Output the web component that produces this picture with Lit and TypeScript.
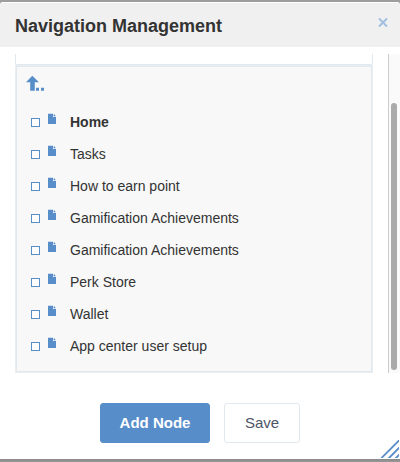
import { LitElement, html, css } from "lit";
import { customElement, property } from "lit/decorators.js";

@customElement("nav-node")
class NavNode extends LitElement {
  @property() label = "";
  @property({ type: Boolean }) selected = false;

  static styles = css`
    :host { display: block; }
    .row { display: flex; height: 32px; padding-left: 15px; color: #333; font-size: 14px; line-height: 32px; }
    .check { box-sizing: border-box; width: 9px; height: 9px; border: 1px solid #578dc9; background: #fff; margin: 12px 8px 0 0; }
    .file { display: block; width: 8px; height: 11px; margin: 7px 14px 0 0; }
    .selected { font-weight: bold; }
  `;

  render() {
    return html`<div class="row">
      <span class="check"></span>
      <svg class="file" viewBox="0 0 8 11"><path fill="#578dc9" d="M0 .7h5v3.2h3v7H0z"/><path fill="#578dc9" d="M5.7 .8L8 3.2H5.7z"/></svg>
      <span class=${this.selected ? "selected" : ""}>${this.label}</span>
    </div>`;
  }
}

@customElement("app-root")
class AppRoot extends LitElement {
  static styles = css`
    :host { display: block; height: 462px; box-sizing: border-box; padding-top: 2px; overflow: hidden; background: linear-gradient(#9d9d9d 0 456px, #888 459px, #999 462px); font-family: "Liberation Sans", Arial, sans-serif; }
    .dialog { box-sizing: border-box; position: relative; height: 457px; background: #fff; border-radius: 3px 3px 0 0; border-top: 1px solid #fff; display: flex; flex-direction: column; }
    .header { height: 44px; box-sizing: border-box; padding: 0 12px 0 15px; background: #f0f0f0; border-radius: 3px 3px 0 0; display: flex; justify-content: space-between; }
    .title { font-size: 18px; font-weight: bold; line-height: 46px; color: #333; }
    .close { width: 11px; height: 11px; margin-top: 14px; }
    .body { height: 319px; margin-top: 7px; display: flex; justify-content: space-between; overflow: hidden; }
    .content { width: 358px; margin-left: 15px; }
    .above { box-sizing: border-box; height: 11px; border: 1px solid #e1e8ee; border-top: 0; border-radius: 0 0 2px 2px; }
    .list { box-sizing: border-box; height: 308px; border: 1px solid #e9eef2; outline: 1px solid #e1e8ee; outline-offset: -2px; background: #f8f8f8; }
    .up { display: block; width: 19px; height: 16px; margin: 9px 0 15px 10px; }
    .track { box-sizing: border-box; width: 12px; border-left: 1px solid #ccc; background: #fafafa; padding: 49px 0 0 2px; }
    .thumb { width: 6px; height: 267px; border-radius: 3px; background: #aaa; }
    .actions { display: flex; justify-content: center; gap: 14px; margin-top: 30px; }
    .button { box-sizing: border-box; height: 40px; border: 1px solid #e1e8ee; border-radius: 3px; background: #fff; color: #4d5466; font: 15px/38px "Liberation Sans", Arial, sans-serif; padding: 0; width: 76px; }
    .primary { width: 110px; border-color: #578dc9; background: #578dc9; color: #fff; font-weight: bold; }
    .resize { position: absolute; right: 1px; bottom: 1px; width: 18px; height: 18px; }
  `;

  render() {
    const nodes = ["Home", "Tasks", "How to earn point", "Gamification Achievements", "Gamification Achievements", "Perk Store", "Wallet", "App center user setup"];
    return html`<div class="dialog">
      <div class="header">
        <span class="title">Navigation Management</span>
        <svg class="close" viewBox="0 0 11 11"><path d="M2 1.5l8 8M10 1.5l-8 8" fill="none" stroke="#a1bfe0" stroke-width="2"/></svg>
      </div>
      <div class="body">
        <div class="content">
          <div class="above"></div>
          <div class="list">
            <svg class="up" viewBox="0 0 19 16"><path fill="#578dc9" d="M6.3 .7L13 7.3H8.8v8.4H4.2V7.3H0zM10 12.8h3v3h-3zM15 12.8h3v3h-3z"/></svg>
            ${nodes.map((n, i) => html`<nav-node .label=${n} .selected=${i === 0}></nav-node>`)}
          </div>
        </div>
        <div class="track"><div class="thumb"></div></div>
      </div>
      <div class="actions"><button class="button primary">Add Node</button><button class="button">Save</button></div>
      <svg class="resize" viewBox="0 0 18 18"><path d="M0 18.5L18.5 0M7.5 18.5L18.5 7.5M14.5 18.5l4-4" fill="none" stroke="#578dc9" stroke-width="1.8"/></svg>
    </div>`;
  }
}
